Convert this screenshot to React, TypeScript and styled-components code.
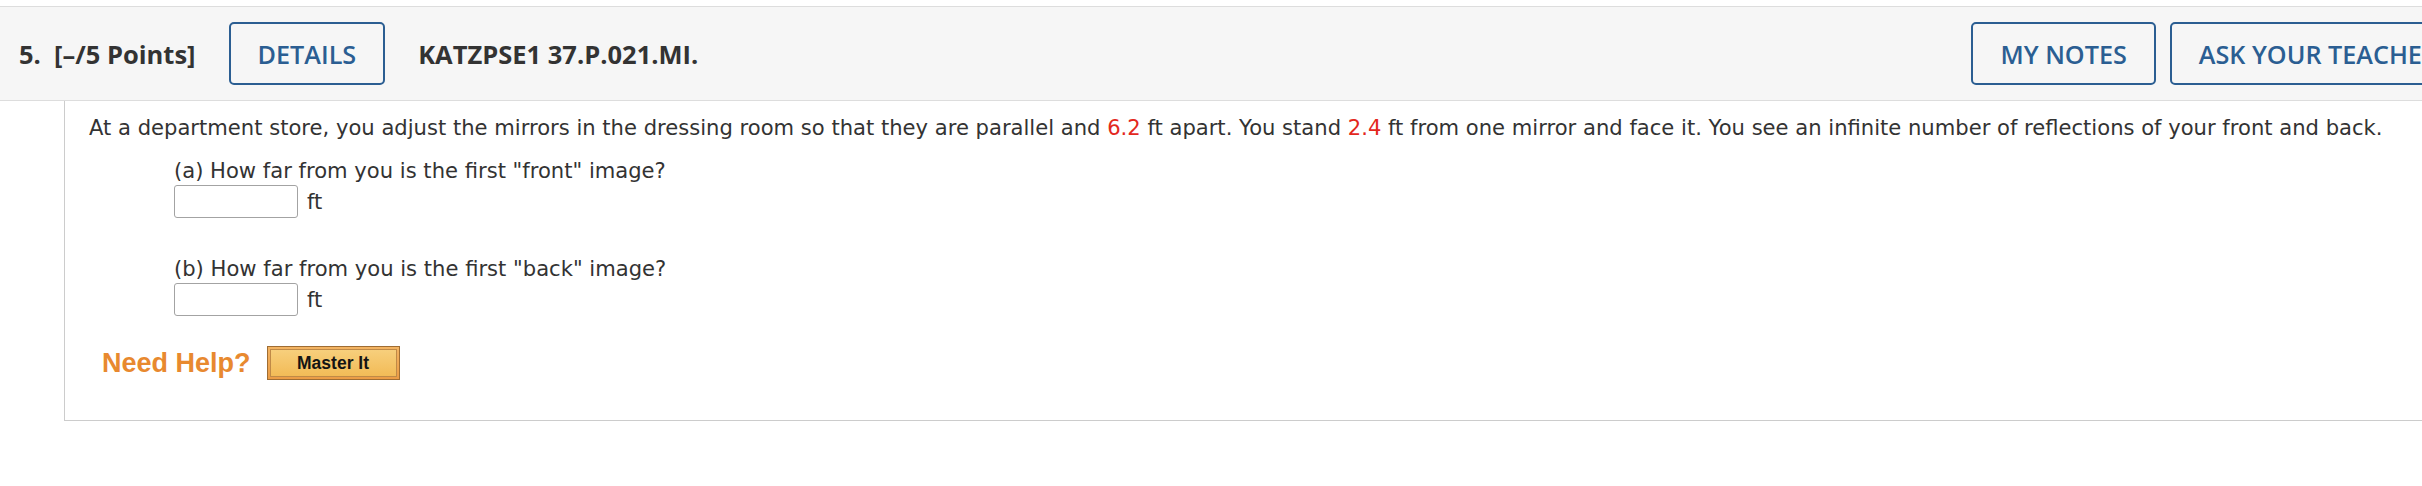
import React from "react";
import styled, { createGlobalStyle } from "styled-components";

const Global = createGlobalStyle`
  html, body {
    margin: 0;
    padding: 0;
    background: #ffffff;
    overflow: hidden;
  }
`;

const Page = styled.div`
  width: 2485px;
  padding-top: 6px;
  box-sizing: border-box;
`;

const Header = styled.header`
  display: flex;
  align-items: center;
  background: #f6f6f6;
  border-top: 1px solid #dddddd;
  border-bottom: 1px solid #dddddd;
  padding: 15px 18px 15px 19px;
  font-family: "Open Sans", "Liberation Sans", sans-serif;
`;

const HeaderLeft = styled.div`
  display: flex;
  align-items: center;
  gap: 33px;
`;

const HeaderRight = styled.div`
  display: flex;
  align-items: center;
  gap: 14px;
  margin-left: auto;
`;

const Title = styled.span`
  font-size: 25.5px;
  font-weight: 700;
  color: #333333;
  white-space: pre;
`;

const OutlineButton = styled.button`
  height: 63px;
  padding: 0 27px;
  border: 2px solid #2b5e92;
  border-radius: 5px;
  background: transparent;
  color: #2b5e92;
  font-family: "Open Sans", "Liberation Sans", sans-serif;
  font-size: 25.2px;
  font-weight: 600;
  white-space: nowrap;
`;

const Box = styled.section`
  margin-left: 64px;
  border-left: 1px solid #cccccc;
  border-bottom: 1px solid #cccccc;
  padding: 14px 0 40px 24px;
  font-family: "DejaVu Sans", Verdana, sans-serif;
  font-size: 21.1px;
  line-height: 25px;
  color: #333333;
`;

const Statement = styled.p`
  margin: 0;
  white-space: nowrap;
`;

const Num = styled.span`
  color: #e3281d;
`;

const Parts = styled.div`
  margin-left: 85px;
`;

const Question = styled.p<{ $gap: number }>`
  margin: ${(p) => p.$gap}px 0 2px 0;
  white-space: nowrap;
`;

const AnswerRow = styled.div`
  display: flex;
  align-items: center;
`;

const AnswerInput = styled.input`
  width: 124px;
  height: 33px;
  box-sizing: border-box;
  border: 1px solid #a3a3a3;
  border-radius: 3px;
  background: #ffffff;
  margin: 0;
`;

const Unit = styled.span`
  margin-left: 9px;
`;

const HelpRow = styled.div`
  display: flex;
  align-items: center;
  margin: 30px 0 0 13px;
`;

const NeedHelp = styled.span`
  font-family: "Liberation Sans", Arial, sans-serif;
  font-weight: 700;
  font-size: 27px;
  color: #e8892f;
  line-height: 34px;
`;

const MasterButton = styled.button`
  margin-left: 16px;
  width: 133px;
  height: 34px;
  box-sizing: border-box;
  padding: 2px;
  border: 1px solid #9f6d33;
  background: linear-gradient(#f3b463, #eb9c45);
  display: flex;
`;

const MasterInner = styled.span`
  flex: 1;
  display: flex;
  align-items: center;
  justify-content: center;
  border: 1px solid #c08a47;
  background: linear-gradient(#f7cf7c, #f2bb57);
  font-family: "Liberation Sans", Arial, sans-serif;
  font-weight: 700;
  font-size: 17.5px;
  color: #141414;
`;

export default function App() {
  return (
    <Page>
      <Global />
      <Header>
        <HeaderLeft>
          <Title>5.  [–/5 Points]</Title>
          <OutlineButton>DETAILS</OutlineButton>
          <Title>KATZPSE1 37.P.021.MI.</Title>
        </HeaderLeft>
        <HeaderRight>
          <OutlineButton>MY NOTES</OutlineButton>
          <OutlineButton>ASK YOUR TEACHER</OutlineButton>
        </HeaderRight>
      </Header>
      <Box>
        <Statement>
          At a department store, you adjust the mirrors in the dressing room so that they are parallel and{" "}
          <Num>6.2</Num> ft apart. You stand <Num>2.4</Num> ft from one mirror and face it. You see an infinite
          number of reflections of your front and back.
        </Statement>
        <Parts>
          <Question $gap={18}>(a) How far from you is the first "front" image?</Question>
          <AnswerRow>
            <AnswerInput type="text" />
            <Unit>ft</Unit>
          </AnswerRow>
          <Question $gap={38}>(b) How far from you is the first "back" image?</Question>
          <AnswerRow>
            <AnswerInput type="text" />
            <Unit>ft</Unit>
          </AnswerRow>
        </Parts>
        <HelpRow>
          <NeedHelp>Need Help?</NeedHelp>
          <MasterButton>
            <MasterInner>Master It</MasterInner>
          </MasterButton>
        </HelpRow>
      </Box>
    </Page>
  );
}
